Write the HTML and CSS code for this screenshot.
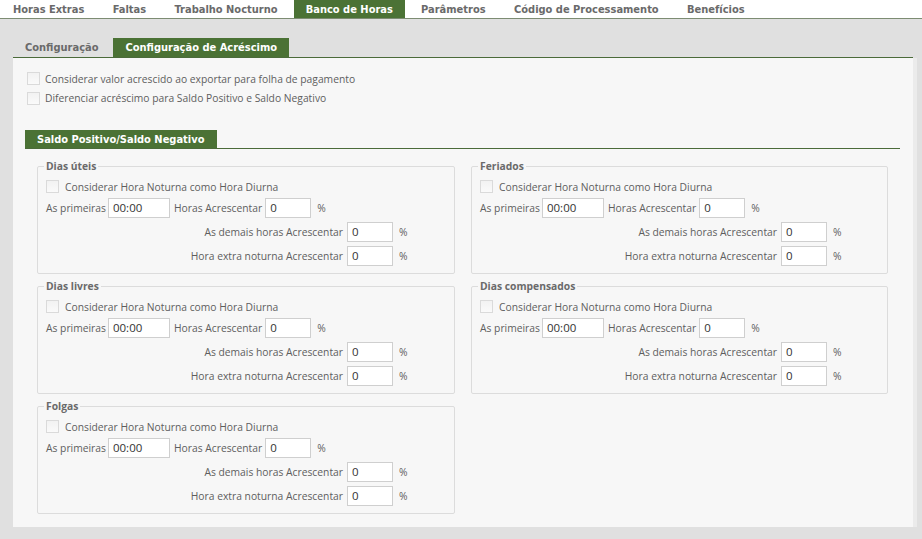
FILE: index.html
```html
<!DOCTYPE html>
<html lang="pt">
<head>
<meta charset="utf-8">
<title>Banco de Horas</title>
<link rel="stylesheet" href="styles.css">
</head>
<body>
<div class="topbar">
  <span class="tab">Horas Extras</span>
  <span class="tab">Faltas</span>
  <span class="tab">Trabalho Nocturno</span>
  <span class="tab active">Banco de Horas</span>
  <span class="tab">Parâmetros</span>
  <span class="tab">Código de Processamento</span>
  <span class="tab">Benefícios</span>
</div>
<div class="main">
  <div class="subtabs">
    <span class="tab">Configuração</span>
    <span class="tab active">Configuração de Acréscimo</span>
  </div>
  <div class="panel">
    <div class="chkrow top"><span class="chk"></span><span>Considerar valor acrescido ao exportar para folha de pagamento</span></div>
    <div class="chkrow top"><span class="chk"></span><span>Diferenciar acréscimo para Saldo Positivo e Saldo Negativo</span></div>

    <div class="sectiontabs"><span class="tab active">Saldo Positivo/Saldo Negativo</span></div>

    <div class="groups">
      <fieldset class="group">
        <legend>Dias úteis</legend>
        <div class="chkrow"><span class="chk"></span><span>Considerar Hora Noturna como Hora Diurna</span></div>
        <div class="row"><span>As primeiras</span><span class="inp time">00:00</span><span>Horas Acrescentar</span><span class="inp pct">0</span><span class="unit">%</span></div>
        <div class="row"><span class="rlabel">As demais horas Acrescentar</span><span class="inp pct">0</span><span class="unit">%</span></div>
        <div class="row"><span class="rlabel">Hora extra noturna Acrescentar</span><span class="inp pct">0</span><span class="unit">%</span></div>
      </fieldset>
      <fieldset class="group">
        <legend>Feriados</legend>
        <div class="chkrow"><span class="chk"></span><span>Considerar Hora Noturna como Hora Diurna</span></div>
        <div class="row"><span>As primeiras</span><span class="inp time">00:00</span><span>Horas Acrescentar</span><span class="inp pct">0</span><span class="unit">%</span></div>
        <div class="row"><span class="rlabel">As demais horas Acrescentar</span><span class="inp pct">0</span><span class="unit">%</span></div>
        <div class="row"><span class="rlabel">Hora extra noturna Acrescentar</span><span class="inp pct">0</span><span class="unit">%</span></div>
      </fieldset>
      <fieldset class="group">
        <legend>Dias livres</legend>
        <div class="chkrow"><span class="chk"></span><span>Considerar Hora Noturna como Hora Diurna</span></div>
        <div class="row"><span>As primeiras</span><span class="inp time">00:00</span><span>Horas Acrescentar</span><span class="inp pct">0</span><span class="unit">%</span></div>
        <div class="row"><span class="rlabel">As demais horas Acrescentar</span><span class="inp pct">0</span><span class="unit">%</span></div>
        <div class="row"><span class="rlabel">Hora extra noturna Acrescentar</span><span class="inp pct">0</span><span class="unit">%</span></div>
      </fieldset>
      <fieldset class="group">
        <legend>Dias compensados</legend>
        <div class="chkrow"><span class="chk"></span><span>Considerar Hora Noturna como Hora Diurna</span></div>
        <div class="row"><span>As primeiras</span><span class="inp time">00:00</span><span>Horas Acrescentar</span><span class="inp pct">0</span><span class="unit">%</span></div>
        <div class="row"><span class="rlabel">As demais horas Acrescentar</span><span class="inp pct">0</span><span class="unit">%</span></div>
        <div class="row"><span class="rlabel">Hora extra noturna Acrescentar</span><span class="inp pct">0</span><span class="unit">%</span></div>
      </fieldset>
      <fieldset class="group">
        <legend>Folgas</legend>
        <div class="chkrow"><span class="chk"></span><span>Considerar Hora Noturna como Hora Diurna</span></div>
        <div class="row"><span>As primeiras</span><span class="inp time">00:00</span><span>Horas Acrescentar</span><span class="inp pct">0</span><span class="unit">%</span></div>
        <div class="row"><span class="rlabel">As demais horas Acrescentar</span><span class="inp pct">0</span><span class="unit">%</span></div>
        <div class="row"><span class="rlabel">Hora extra noturna Acrescentar</span><span class="inp pct">0</span><span class="unit">%</span></div>
      </fieldset>
    </div>
  </div>
</div>
</body>
</html>
```
FILE: styles.css
```css
html, body {
  margin: 0;
  padding: 0;
}
body {
  width: 922px;
  height: 539px;
  overflow: hidden;
  background: #e0e0e0;
  font-family: "Open Sans", "Noto Sans", sans-serif;
  font-size: 10.3px;
  color: #5e5e5e;
}
.tab {
  font-family: "DejaVu Sans Condensed", "DejaVu Sans", sans-serif;
  font-weight: bold;
  font-size: 11px;
  color: #6a6a6a;
  padding: 0 12px;
  display: flex;
  align-items: center;
}
.tab.active {
  background: #4b7235;
  color: #ffffff;
}
.topbar {
  display: flex;
  height: 18px;
  background: #ffffff;
  border-bottom: 1px solid #7d8c73;
}
.topbar .tab {
  padding: 0 14.2px;
}
.topbar .tab:first-child {
  padding-left: 13px;
}
.topbar .tab.active {
  padding: 0 12px;
  margin: 0 2px;
}
.main {
  padding: 19px 5px 12px 13px;
}
.subtabs {
  display: flex;
  height: 19px;
  border-bottom: 1px solid #4b6b3a;
  margin-right: 4px;
}
.subtabs .tab.active {
  margin-left: 3px;
}
.panel {
  background: #f7f7f7;
  height: 459px;
  padding: 10px 13px 0 12px;
  border-right: 4px solid #ebebeb;
}
.chkrow {
  display: flex;
  align-items: center;
  height: 20px;
  gap: 6px;
}
.chkrow.top {
  margin-left: 2px;
  gap: 5px;
}
.chkrow.top:first-child {
  margin-top: 1px;
  height: 19px;
}
.chk {
  width: 11px;
  height: 11px;
  border: 1px solid #dadada;
  background: linear-gradient(#f2f2f2, #fafafa);
  flex: none;
}
.sectiontabs {
  display: flex;
  height: 18px;
  margin-top: 22px;
  border-bottom: 1px solid #4b6b3a;
}
.groups {
  display: grid;
  grid-template-columns: 418px 417px;
  column-gap: 16px;
  row-gap: 6px;
  padding: 11px 0 0 12px;
}
.group {
  margin: 0;
  min-width: 0;
  border: 1px solid #dcdcdc;
  border-radius: 2px;
  padding: 3px 8px 5px 8px;
}
.group legend {
  font-weight: bold;
  color: #6a6a6a;
  font-size: 10.3px;
  line-height: 13px;
  padding: 0 2px;
  margin-left: -2px;
}
.group .chkrow {
  margin-top: 1px;
  height: 19px;
}
.row {
  display: flex;
  align-items: center;
  height: 24px;
}
.inp {
  height: 18px;
  border: 1px solid #cfcfcf;
  background: #ffffff;
  color: #333333;
  font-size: 11.5px;
  line-height: 18px;
  padding: 0 4px;
  box-sizing: content-box;
  flex: none;
}
.inp.time {
  width: 52px;
  margin: 0 4px 0 2px;
}
.inp.pct {
  width: 36px;
  margin: 0 0 0 3px;
}
.unit {
  margin-left: 6px;
}
.rlabel {
  width: 297px;
  text-align: right;
  margin-right: 1px;
}
```
